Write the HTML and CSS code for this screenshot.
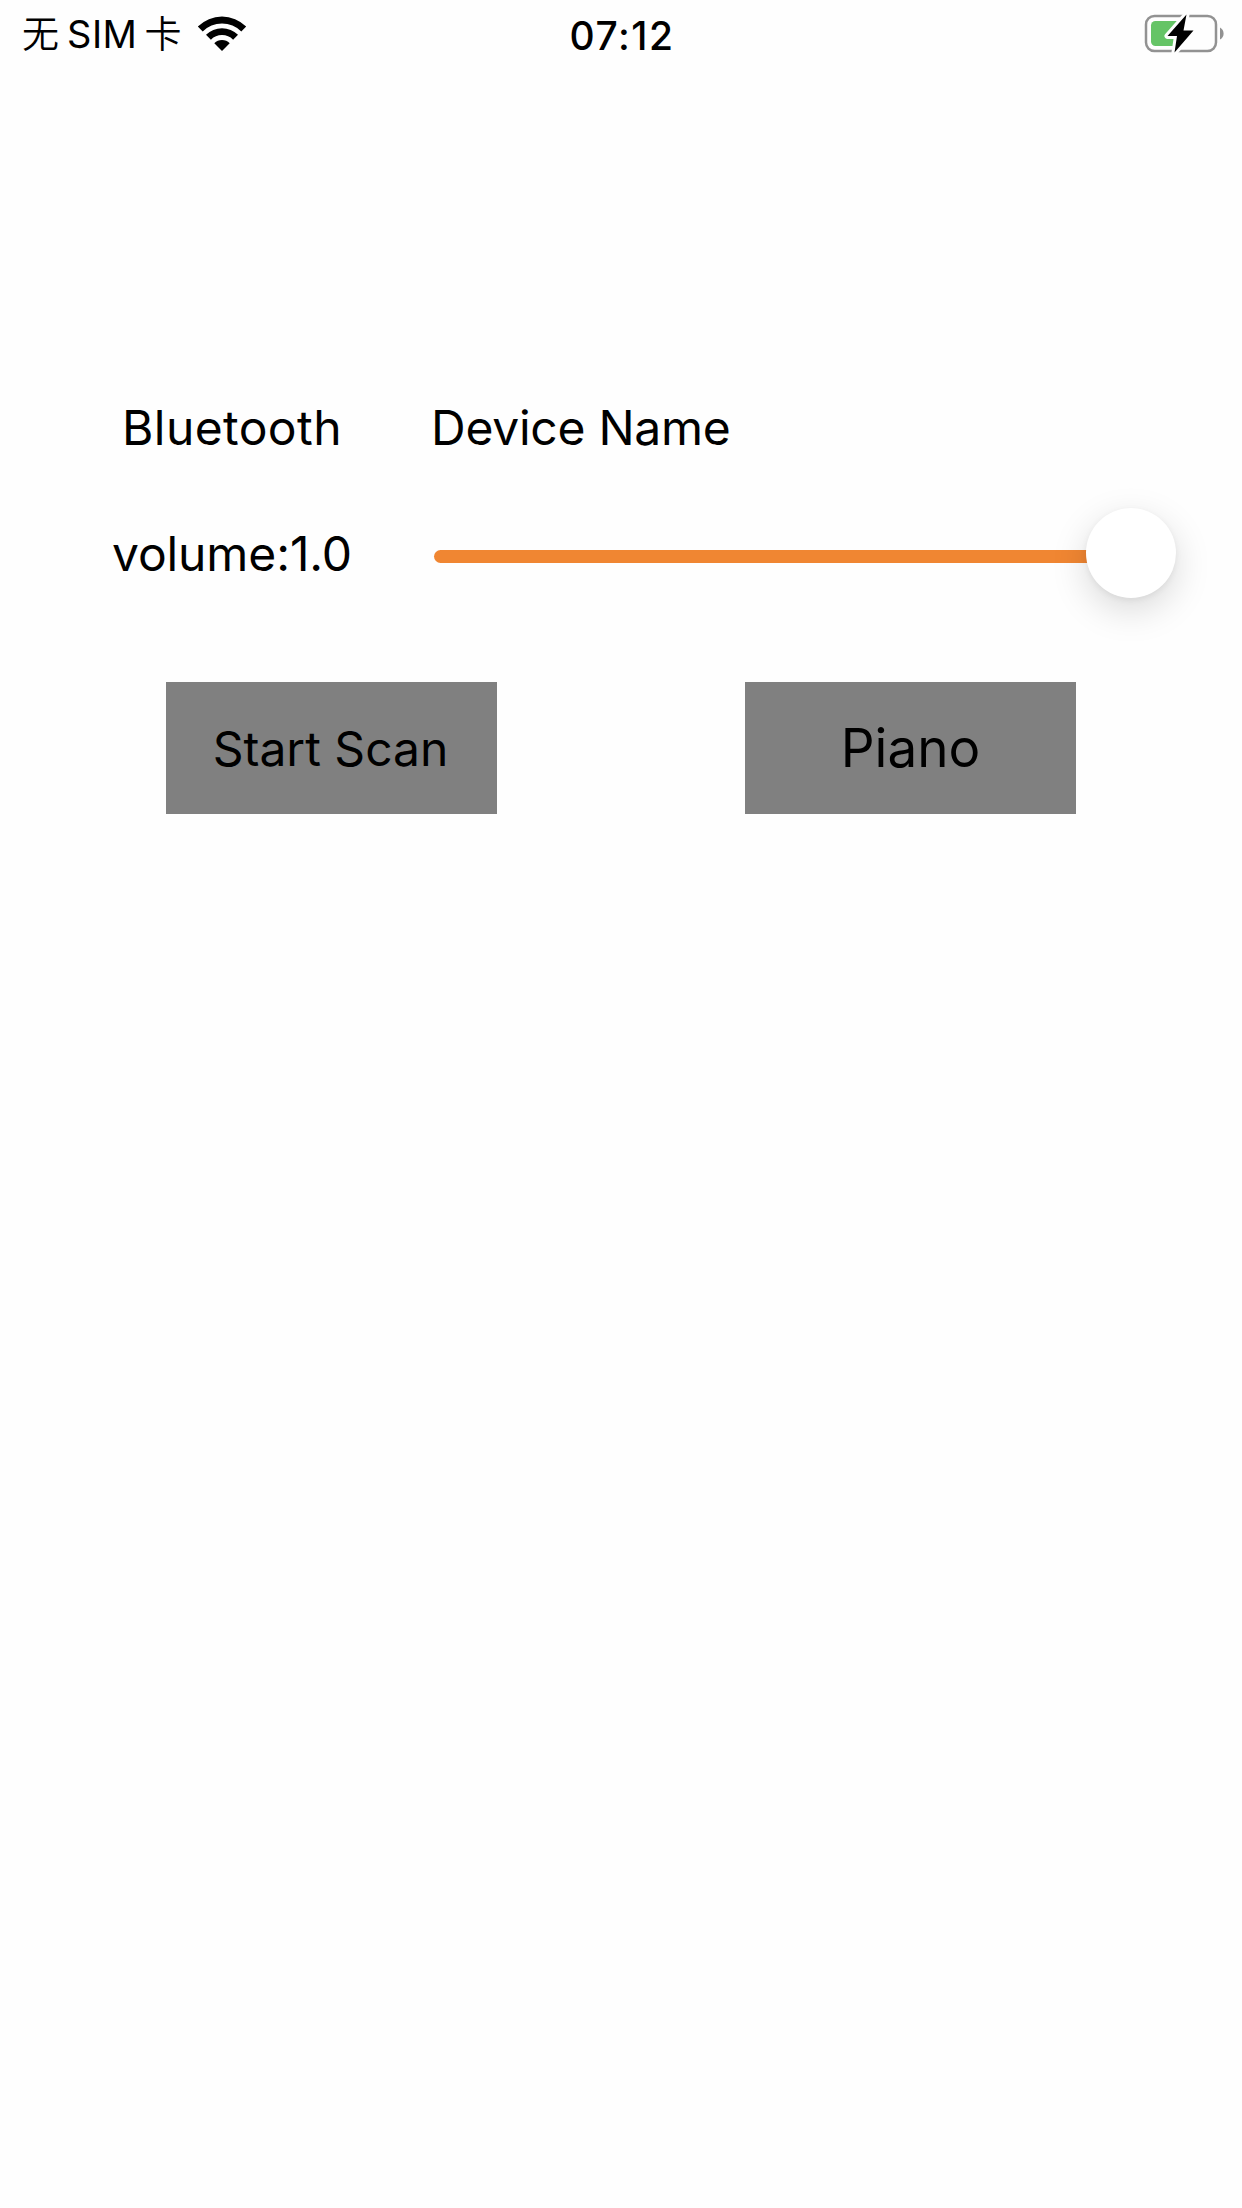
FILE: index.html
```
<!DOCTYPE html>
<html lang="zh-CN">
<head>
<meta charset="UTF-8">
<meta name="viewport" content="width=device-width, initial-scale=1.0">
<title>Bluetooth Piano</title>
<link rel="stylesheet" href="styles.css">
</head>
<body>

<header class="status-bar">
  <div class="carrier">
    <span class="carrier-name">无<span class="sim">SIM</span>卡</span>
    <svg class="wifi" viewBox="0 0 50 37" width="50" height="37">
      <path d="M0.8 11.5 A34.4 34.4 0 0 1 49.2 11.5 L44.3 16.4 A27.3 27.3 0 0 0 5.7 16.4 Z"/>
      <path d="M9 19.8 A22.6 22.6 0 0 1 41 19.8 L36.1 24.7 A15.7 15.7 0 0 0 13.9 24.7 Z"/>
      <path d="M17.3 28.2 A10.9 10.9 0 0 1 32.7 28.2 L25 36 Z"/>
    </svg>
  </div>
  <div class="time">07:12</div>
  <svg class="battery" viewBox="0 0 80 40" width="80" height="40">
    <rect class="battery-case" x="2" y="2" width="70" height="35" rx="8.5"/>
    <rect class="battery-level" x="7" y="7" width="34" height="25" rx="4.5"/>
    <path class="battery-cap" d="M76 13.5 Q79.6 15.5 79.6 19.5 Q79.6 23.5 76 25.5 Z"/>
    <path class="bolt" d="M42.5 0.5 L23.5 22 H33 L30.5 38.5 L49.5 16.5 H39.5 Z"/>
  </svg>
</header>

<main class="panel">
  <div class="row">
    <label class="label bluetooth">Bluetooth</label>
    <div class="device-name">Device Name</div>
  </div>
  <div class="row volume-row">
    <label class="label volume" for="volume">volume:1.0</label>
    <input type="range" id="volume" min="0" max="1" step="0.1" value="1" class="volume-slider">
  </div>
  <div class="buttons">
    <button class="scan-button">Start Scan</button>
    <button class="piano-button">Piano</button>
  </div>
</main>

<script>
const volumeSlider = document.querySelector('.volume-slider');
const volumeLabel = document.querySelector('.volume');

volumeSlider.addEventListener('input', function() {
  volumeLabel.textContent = `volume:${Number(this.value).toFixed(1)}`;
});
</script>

</body>
</html>
```

FILE: styles.css
```
body {
  margin: 0;
  min-height: 100vh;
  font-family: Inter, "Noto Sans CJK SC", sans-serif;
  font-size: 48px;
  background-color: #fefefe;
  color: black;
}
.status-bar {
  display: grid;
  grid-template-columns: 1fr auto 1fr;
  align-items: center;
  height: 66px;
  padding: 0 18px 0 22px;
}
.carrier {
  display: flex;
  align-items: center;
  gap: 16px;
}
.carrier-name {
  font-size: 37px;
  font-weight: 350;
  line-height: 68px;
  white-space: nowrap;
}
.sim {
  margin: 0 7px 0 8px;
  font-size: 38px;
  font-weight: 400;
  letter-spacing: 0.5px;
}
.wifi {
  margin-bottom: 2px;
}
.time {
  font-size: 39px;
  font-weight: 550;
  line-height: 66px;
  letter-spacing: 1.5px;
  padding: 2px 2px 0 0;
}
.battery {
  justify-self: end;
  margin-bottom: 2px;
}
.battery-case {
  fill: none;
  stroke: #929292;
  stroke-width: 2.5;
}
.battery-level {
  fill: #65c466;
}
.battery-cap {
  fill: #929292;
}
.bolt {
  stroke: #fefefe;
  stroke-width: 6;
  stroke-linejoin: round;
  paint-order: stroke;
}
.panel {
  padding: 327px 66px 0 100px;
}
.row {
  display: flex;
  align-items: center;
  height: 68px;
}
.label {
  width: 264px;
  margin-right: 70px;
  text-align: center;
  white-space: nowrap;
}
.bluetooth {
  letter-spacing: 0.4px;
}
.device-name {
  margin-left: -3px;
  letter-spacing: -0.25px;
}
.volume-row {
  height: 90px;
  margin-top: 47px;
}
.volume {
  letter-spacing: -0.1px;
}
.volume-slider {
  -webkit-appearance: none;
  appearance: none;
  width: 742px;
  height: 90px;
  margin: 7px 0 0;
  background: transparent;
}
.volume-slider::-webkit-slider-runnable-track {
  height: 13px;
  border-radius: 7px;
  background: linear-gradient(to right, #f08632 700px, transparent 700px);
}
.volume-slider::-webkit-slider-thumb {
  -webkit-appearance: none;
  appearance: none;
  width: 90px;
  height: 90px;
  margin-top: -42px;
  border-radius: 50%;
  background: white;
  box-shadow: 0 12px 36px rgba(0, 0, 0, 0.15), 0 2px 6px rgba(0, 0, 0, 0.06);
}
.buttons {
  display: flex;
  justify-content: space-between;
  margin-top: 84px;
  padding: 0 100px 0 66px;
}
button {
  width: 331px;
  height: 132px;
  padding: 0;
  border: none;
  font-family: inherit;
  color: black;
  background-color: #808080;
}
.scan-button {
  padding-right: 2px;
  font-size: 48px;
}
.piano-button {
  font-size: 53px;
}
```
